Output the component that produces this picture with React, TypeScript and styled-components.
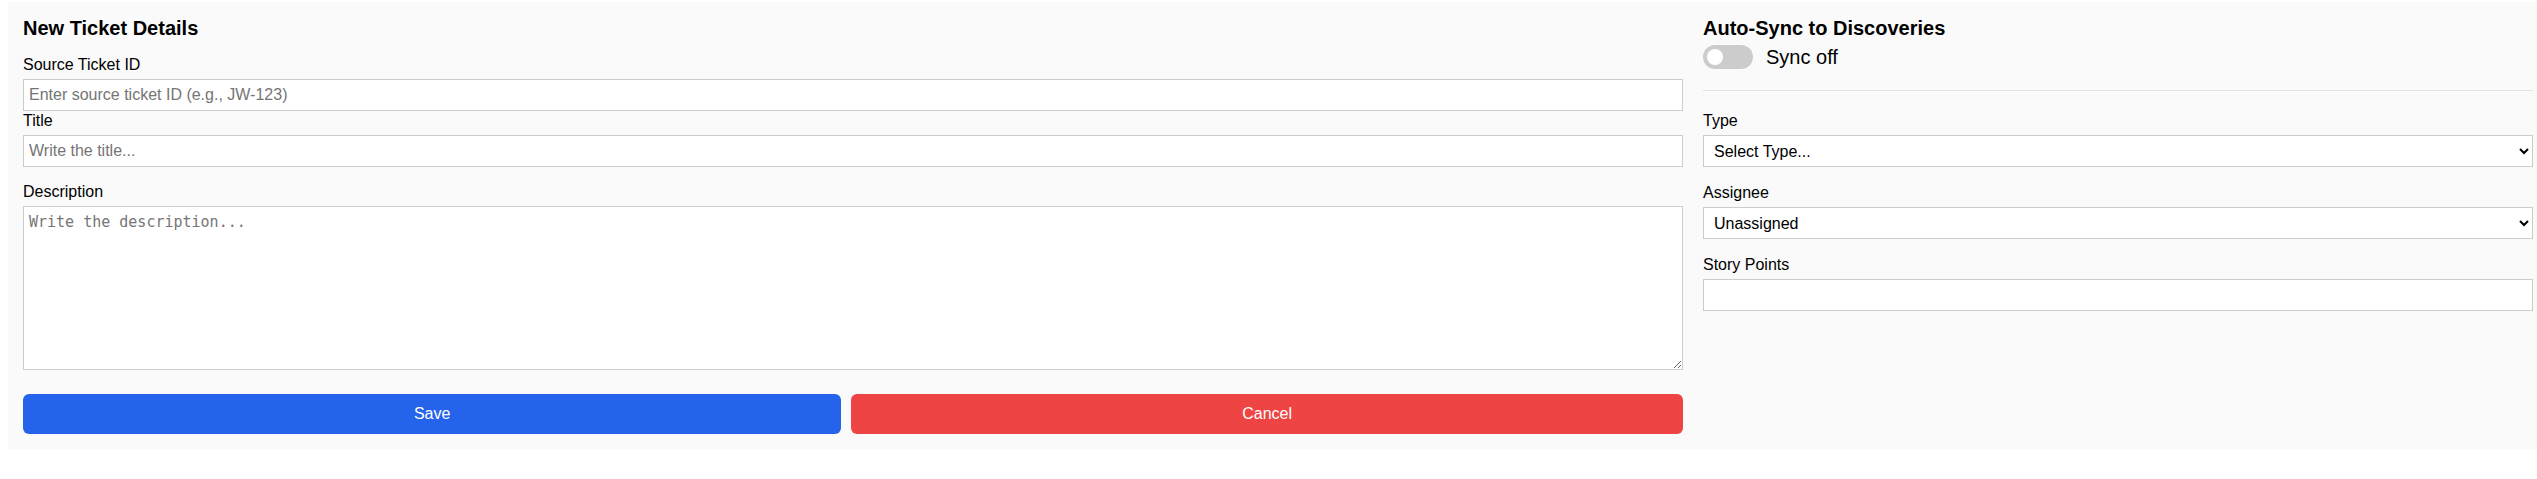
import React, { useState } from 'react';
import styled, { createGlobalStyle } from 'styled-components';

const GlobalStyle = createGlobalStyle`
  body {
    margin: 2px 0 0 8px;
    background: #ffffff;
    font-family: 'Liberation Sans', Arial, sans-serif;
    color: #000000;
  }
`;

const Panel = styled.div`
  box-sizing: border-box;
  background: #fafafa;
  padding: 15px 4px 15px 15px;
  display: grid;
  grid-template-columns: 2fr 1fr;
  column-gap: 20px;
  align-items: start;
`;

const Column = styled.div`
  display: flex;
  flex-direction: column;
  min-width: 0;
`;

const Heading = styled.h3<{ $after: number }>`
  margin: 0 0 ${(p) => p.$after}px;
  font-size: 20px;
  line-height: 23px;
  font-weight: bold;
`;

const Field = styled.div<{ $after?: number }>`
  display: flex;
  flex-direction: column;
  margin-bottom: ${(p) => p.$after ?? 17}px;
`;

const Label = styled.label`
  display: block;
  font-size: 16px;
  line-height: 18px;
  margin-bottom: 5px;
`;

const TextInput = styled.input`
  box-sizing: border-box;
  width: 100%;
  height: 32px;
  padding: 6px 5px;
  border: 1px solid #cccccc;
  border-radius: 0;
  background: #ffffff;
  font-family: 'Liberation Sans', Arial, sans-serif;
  font-size: 16px;
  outline: none;
  &::placeholder {
    color: #757575;
  }
`;

const TextArea = styled.textarea`
  box-sizing: border-box;
  display: block;
  width: 100%;
  height: 164px;
  padding: 6px 5px;
  border: 1px solid #cccccc;
  border-radius: 0;
  background: #ffffff;
  font-family: 'DejaVu Sans Mono', 'Liberation Mono', monospace;
  font-size: 15px;
  outline: none;
  &::placeholder {
    color: #757575;
  }
`;

const Select = styled.select`
  box-sizing: border-box;
  width: 100%;
  height: 32px;
  padding: 0 6px;
  border: 1px solid #cccccc;
  border-radius: 0;
  background: #ffffff;
  color: #000000;
  font-family: 'Liberation Sans', Arial, sans-serif;
  font-size: 16px;
`;

const Actions = styled.div`
  display: flex;
  gap: 10px;
  margin-top: 24px;
`;

const Button = styled.button<{ $variant: 'save' | 'cancel' }>`
  flex: 1 1 auto;
  height: 40px;
  border: none;
  border-radius: 6px;
  color: #ffffff;
  font-family: 'Liberation Sans', Arial, sans-serif;
  font-size: 16px;
  cursor: pointer;
  background: ${(p) => (p.$variant === 'save' ? '#2563eb' : '#ef4444')};
`;

const SyncRow = styled.div`
  display: flex;
  align-items: center;
  gap: 13px;
  height: 24px;
  margin-top: 5px;
`;

const Track = styled.button<{ $on: boolean }>`
  display: flex;
  align-items: center;
  justify-content: ${(p) => (p.$on ? 'flex-end' : 'flex-start')};
  width: 50px;
  height: 24px;
  padding: 0 4px;
  border: none;
  border-radius: 12px;
  background: ${(p) => (p.$on ? '#2563eb' : '#cccccc')};
  cursor: pointer;
`;

const Knob = styled.span`
  width: 16px;
  height: 16px;
  border-radius: 50%;
  background: #ffffff;
`;

const SyncText = styled.span`
  font-size: 20px;
  line-height: 23px;
`;

const Divider = styled.hr`
  border: none;
  border-top: 1px solid #e3e3e3;
  margin: 21px 0 21px;
`;

function App() {
  const [sync, setSync] = useState(false);

  return (
    <>
      <GlobalStyle />
      <Panel>
        <Column>
          <Heading $after={16}>New Ticket Details</Heading>
          <Field $after={1}>
            <Label>Source Ticket ID</Label>
            <TextInput placeholder="Enter source ticket ID (e.g., JW-123)" />
          </Field>
          <Field $after={16}>
            <Label>Title</Label>
            <TextInput placeholder="Write the title..." />
          </Field>
          <Field $after={0}>
            <Label>Description</Label>
            <TextArea placeholder="Write the description..." />
          </Field>
          <Actions>
            <Button $variant="save">Save</Button>
            <Button $variant="cancel">Cancel</Button>
          </Actions>
        </Column>
        <Column>
          <Heading $after={0}>Auto-Sync to Discoveries</Heading>
          <SyncRow>
            <Track $on={sync} onClick={() => setSync(!sync)}>
              <Knob />
            </Track>
            <SyncText>{sync ? 'Sync on' : 'Sync off'}</SyncText>
          </SyncRow>
          <Divider />
          <Field>
            <Label>Type</Label>
            <Select defaultValue="">
              <option value="">Select Type...</option>
              <option value="story">Story</option>
              <option value="bug">Bug</option>
              <option value="task">Task</option>
            </Select>
          </Field>
          <Field>
            <Label>Assignee</Label>
            <Select defaultValue="">
              <option value="">Unassigned</option>
            </Select>
          </Field>
          <Field>
            <Label>Story Points</Label>
            <TextInput type="text" />
          </Field>
        </Column>
      </Panel>
    </>
  );
}

export default App;
